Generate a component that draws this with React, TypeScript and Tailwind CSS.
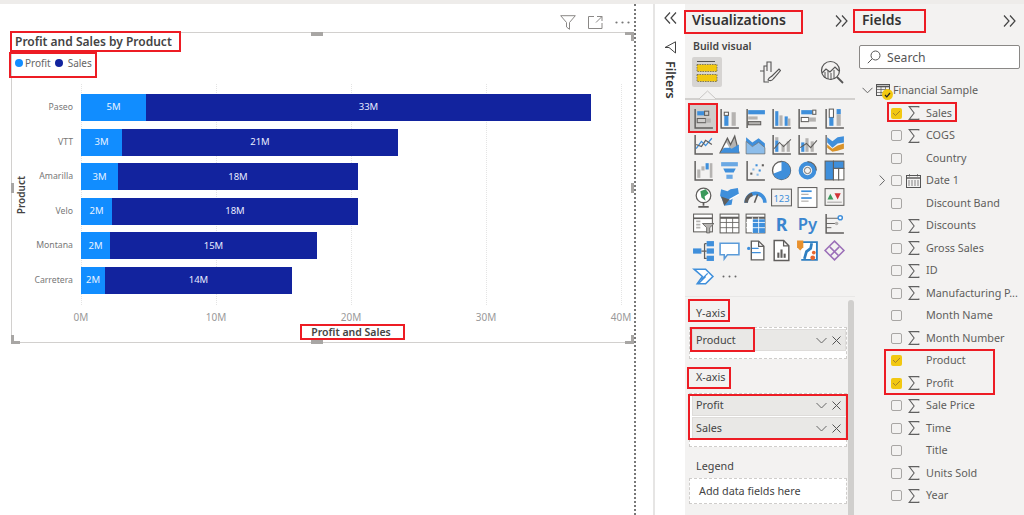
import React from "react";

const G = "#605e5c";
const B = "#3f8fdb";
const L = "#b5b3b1";

const Red = ({ c }: { c: string }) => <div className={"absolute border-[2px] border-[#ed1c24] pointer-events-none " + c} />;

const Ic = ({ children }: { children: React.ReactNode }) => (
  <svg width="23" height="23" viewBox="0 0 22 22" fill="none" stroke={G} strokeWidth="1.2">{children}</svg>
);
const R = (x: number, y: number, w: number, h: number, f: string, s = "none") => <rect x={x} y={y} width={w} height={h} fill={f} stroke={s} strokeWidth="1" />;
const axis = <path d="M3 2V20H20" stroke={G} strokeWidth="1.4" />;

const vizIcons: React.ReactNode[] = [
  <Ic><path d="M3 2V20H20" stroke={G} strokeWidth="1.4" />{R(5, 4, 7, 4, B)}{R(12, 4, 4, 4, "#cfcdcb", G)}{R(5, 11, 8, 4, "#cfcdcb", G)}{R(13, 11, 5, 4, L)}</Ic>,
  <Ic>{axis}{R(6, 8, 4, 10, B)}{R(6, 5, 4, 3, "#fff", G)}{R(13, 5, 4, 13, L)}</Ic>,
  <Ic><path d="M3 2V20" strokeWidth="1.4" />{R(4, 3, 16, 4, B)}{R(4, 9, 9, 3, L)}{R(4, 14, 12, 3, L, G)}</Ic>,
  <Ic>{axis}{R(5, 4, 3, 14, B)}{R(9, 8, 3, 10, L)}{R(14, 9, 3, 9, B)}{R(17, 11, 2.5, 7, L)}</Ic>,
  <Ic>{axis}{R(5, 3, 11, 4, B)}{R(16, 3, 3, 4, "#fff", G)}{R(5, 10, 7, 4, "#fff", G)}{R(12, 10, 7, 4, L)}</Ic>,
  <Ic>{axis}{R(6, 2, 4, 8, "#fff", G)}{R(6, 10, 4, 8, B)}{R(13, 2, 4, 5, B)}{R(13, 7, 4, 11, L)}</Ic>,
  <Ic>{axis}<path d="M4 15L9 8L13 12L19 5" stroke={B} /><path d="M4 11L9 13L13 7L19 11" stroke={G} /></Ic>,
  <Ic><path d="M2 19L9 5L12 11L16 3L20 19Z" fill={L} stroke={G} /><path d="M2 19L8 12L13 15L20 11V19Z" fill={B} stroke="none" /><path d="M8 9L11 14H5Z" fill="#fff" stroke="none" /></Ic>,
  <Ic><path d="M2 4L8 9L14 5L20 10V14L14 9L8 13L2 8Z" fill={B} stroke="none" /><path d="M2 8L8 13L14 9L20 14V20H2Z" fill="#8dbdea" stroke={G} strokeWidth=".6" /></Ic>,
  <Ic>{axis}{R(5, 7, 3, 11, B)}{R(5, 4, 3, 3, L)}{R(11, 11, 3, 7, L)}{R(16, 8, 3, 10, L)}<path d="M4 15L9 9L13 13L20 6" strokeWidth="1" /></Ic>,
  <Ic>{axis}{R(5, 9, 3, 9, B)}{R(9, 5, 3, 13, L)}{R(14, 8, 3, 10, L)}<path d="M4 14L10 10L14 14L20 7" strokeWidth="1" /></Ic>,
  <Ic><path d="M3 2V20H20" /><path d="M4 4L9 8L14 4L20 3V9L14 10L9 14L4 9Z" fill={B} stroke="none" /><path d="M4 11L9 15L14 12L20 10V15L14 17L9 18L4 14Z" fill="#d9932a" stroke="none" /></Ic>,
  <Ic>{axis}{R(5, 10, 3, 8, L)}{R(9, 7, 3, 4, L)}{R(13, 4, 3, 6, B)}{R(17, 4, 2.5, 14, L)}</Ic>,
  <Ic>{R(3, 3, 16, 4, "#6aa8e4")}<path d="M5 9H17L15 13H7Z" fill={B} stroke="none" /><path d="M8 15H14V19H8Z" fill="#6aa8e4" stroke="none" /></Ic>,
  <Ic>{axis}{R(11, 5, 2, 2, B)}{R(8, 9, 2, 2, "#8dbdea")}{R(14, 10, 2, 2, B)}{R(17, 5, 2, 2, G)}{R(6, 13, 2, 2, G)}{R(12, 14, 2, 2, "#8dbdea")}</Ic>,
  <Ic><circle cx="11" cy="11" r="8.6" fill="#fff" stroke={G} strokeWidth="1.3" /><path d="M11 11V2.4A8.6 8.6 0 1 1 3 14Z" fill={B} stroke="none" /></Ic>,
  <Ic><circle cx="11" cy="11" r="6.5" stroke={B} strokeWidth="4" /><path d="M11 2.5A8.5 8.5 0 0 1 19.5 11" stroke={G} strokeWidth="1" /><circle cx="11" cy="11" r="3" stroke={G} strokeWidth=".8" /></Ic>,
  <Ic>{R(2, 2, 8, 18, B, G)}{R(10, 2, 10, 7, B, G)}{R(10, 9, 5, 11, "#fff", G)}{R(15, 9, 5, 11, "#fff", G)}</Ic>,
  <Ic><circle cx="11" cy="9" r="7" fill="#fff" stroke={G} /><path d="M8 5L13 3L16 7L12 10L13 14L9 11Z" fill="#3a9a5c" stroke="none" /><path d="M11 16V19M6 20H16" strokeWidth="1.6" /></Ic>,
  <Ic><path d="M3 3L9 5L12 3L19 2L20 8L14 12L13 18L6 19L4 13L2 9Z" fill={B} stroke="none" /><path d="M3 10L11 13L6 19L4 13Z" fill={G} stroke="none" /><path d="M11 13L20 8" stroke="#fff" /></Ic>,
  <Ic><path d="M2 16A9 9 0 0 1 20 16" stroke={B} strokeWidth="3.5" /><path d="M2 16A9 9 0 0 1 8 8" stroke={G} strokeWidth="3.5" /><path d="M10 16L13 8" stroke={G} strokeWidth="1.5" /></Ic>,
  <Ic>{R(1.5, 3, 19, 16, "#f3f2f1", G)}<text x="11" y="15" textAnchor="middle" fontSize="9" fill={B} stroke="none" fontFamily="'Noto Sans',sans-serif">123</text></Ic>,
  <Ic>{R(2, 1.5, 18, 19, "#fff", G)}<path d="M5 5H15" stroke={B} strokeWidth="1.6" /><path d="M5 8H12" stroke={L} /><path d="M5 11.5H15" stroke={B} strokeWidth="1.6" /><path d="M5 14.5H12" stroke={L} /></Ic>,
  <Ic>{R(2, 2.5, 18, 16, "#f3f2f1", G)}<path d="M5.5 6.5L8.5 12H2.8Z" transform="translate(1.5 1)" fill="#3a9a5c" stroke="none" /><path d="M11 7H17L14 13Z" fill="#d13438" stroke="none" /><path d="M4 15.5H18" stroke={L} /></Ic>,
  <Ic>{R(1.5, 2, 18, 17, "#fff", G)}<path d="M1.5 6H19.5" strokeWidth="1.6" /><path d="M4 9H8M4 12H8M4 15H8" stroke={L} strokeWidth="1.6" /><path d="M10 11H21L17 15V20H14V15Z" fill={L} stroke={G} strokeWidth=".8" /></Ic>,
  <Ic>{R(2, 2, 18, 18, "#fff", G)}<path d="M2 5.5H20" strokeWidth="2" /><path d="M2 10H20M2 15H20M8 5V20M14 5V20" strokeWidth=".8" /></Ic>,
  <Ic>{R(2, 2, 18, 18, "#fff", G)}<path d="M2 5.5H20" strokeWidth="2" />{R(8, 7, 12, 13, B)}<path d="M2 10H20M2 15H20M8 5V20M14 5V20" stroke="#fff" strokeWidth=".8" /></Ic>,
  <Ic><text x="11" y="18" textAnchor="middle" fontSize="17" fontWeight="700" fill="#3b86cf" stroke="none" fontFamily="'Noto Sans',sans-serif">R</text></Ic>,
  <Ic><text x="11" y="17" textAnchor="middle" fontSize="16" fontWeight="600" fill="#3b86cf" stroke="none" fontFamily="'Noto Sans',sans-serif">Py</text></Ic>,
  <Ic><path d="M3 2V20H20" strokeWidth="1.4" /><path d="M3 6H16M3 11H13M3 15H8" stroke={G} strokeWidth=".9" /><circle cx="16.5" cy="5.5" r="2" stroke={B} fill="#fff" strokeWidth="1.4" /><circle cx="13" cy="11" r="1.7" fill={L} stroke="none" /></Ic>,
  <Ic>{R(1, 9, 8, 5, B)}{R(14, 2, 7, 5, B)}{R(14, 9, 7, 5, B)}{R(14, 16, 7, 5, B)}<path d="M9 11.5H14M12 4.5V18.5H14M12 4.5H14" /></Ic>,
  <Ic><path d="M2 4H20V15H9L6 19V15H2Z" fill="#fff" stroke="#5b9bd9" strokeWidth="1.5" /></Ic>,
  <Ic><path d="M7 2H14L19 7V20H7Z" fill="#fff" stroke={G} strokeWidth="1.3" /><path d="M14 2V7H19" /><circle cx="4.5" cy="9" r="1.6" fill={B} stroke="none" /><path d="M7.5 9H14M7.5 13H16" stroke={B} /></Ic>,
  <Ic><path d="M4 1.5H13L18 6.5V20.5H4Z" fill="#fff" stroke={G} strokeWidth="1.4" /><path d="M13 1.5V6.5H18" />{R(7, 13, 2, 5, G)}{R(10, 10, 2, 8, G)}{R(13, 14, 2, 4, G)}</Ic>,
  <Ic><path d="M5 3H20V20H5" fill="#fff" stroke="#2f7fc1" strokeWidth="1.8" /><path d="M8 19L10 12L14 9L15 4" stroke="#2f7fc1" strokeWidth="2.6" /><path d="M1 1.5H7V8L4 11L1 8Z" fill="#e8912d" stroke="none" /><circle cx="17" cy="13" r="1.8" fill="#e8652d" stroke="none" /><circle cx="16" cy="18" r="2.3" fill="#e8652d" stroke="none" /></Ic>,
  <Ic><path d="M11 2L16 7L20 11L16 15L11 20L6 15L2 11L6 7Z" stroke="#9b6fb8" strokeWidth="1.5" /><path d="M6.5 7.5L15 16M15.5 7.5L7 16" stroke="#9b6fb8" strokeWidth="1.5" /></Ic>,
  <Ic><path d="M2 4H13L20 11L13 18H5L10 11Z" stroke="#3f8fdb" strokeWidth="1.5" fill="#fff" /><path d="M9 14L15 8M6 18L13 11" stroke="#3f8fdb" strokeWidth="1.3" /></Ic>,
  <svg width="15" height="3" viewBox="0 0 15 3" fill="#666"><circle cx="1.5" cy="1.5" r="1" /><circle cx="7.5" cy="1.5" r="1" /><circle cx="13.5" cy="1.5" r="1" /></svg>,
];

const Chevrons = ({ dir }: { dir: "l" | "r" }) => (
  <svg width="13" height="12" viewBox="0 0 13 12" fill="none" stroke="#444" strokeWidth="1.2">
    {dir === "l" ? <path d="M6 .5L1 6L6 11.5M12 .5L7 6L12 11.5" /> : <path d="M1 .5L6 6L1 11.5M7 .5L12 6L7 11.5" />}
  </svg>
);

const Pill = ({ label, c }: { label: string; c: string }) => (
  <div className={"flex items-center justify-between bg-[#e9e8e6] border border-[#dedcda] pl-[3px] pr-[4px] text-[10.8px] text-[#444] " + c}>
    <span>{label}</span>
    <div className="flex items-center gap-[5px]">
      <svg width="11" height="7" viewBox="0 0 11 7" fill="none" stroke="#666" strokeWidth="1"><path d="M.5 1L5.5 6L10.5 1" /></svg>
      <svg width="9" height="9" viewBox="0 0 9 9" fill="none" stroke="#555" strokeWidth="1"><path d="M.5 .5L8.5 8.5M8.5 .5L.5 8.5" /></svg>
    </div>
  </div>
);

const Sigma = () => (
  <svg width="12" height="14" viewBox="0 0 11 13" fill="none" stroke="#606060" strokeWidth="1"><path d="M10 1.5V.6H1L5.6 6.5L1 12.4H10V11.5" /></svg>
);

const Check = ({ on }: { on?: boolean }) =>
  on ? (
    <div className="w-[11px] h-[11px] rounded-[2px] bg-[#f2c811] flex items-center justify-center">
      <svg width="9" height="7" viewBox="0 0 9 7" fill="none" stroke="#a5822a" strokeWidth="1"><path d="M1 3L3.5 5.5L8 1" /></svg>
    </div>
  ) : (
    <div className="w-[11px] h-[11px] rounded-[2px] border border-[#a8a6a4]" />
  );

const fields: [string, boolean, boolean][] = [
  ["Sales", true, true], ["COGS", false, true], ["Country", false, false], ["Date 1", false, false],
  ["Discount Band", false, false], ["Discounts", false, true], ["Gross Sales", false, true], ["ID", false, true],
  ["Manufacturing P...", false, true], ["Month Name", false, false], ["Month Number", false, true], ["Product", true, false],
  ["Profit", true, true], ["Sale Price", false, true], ["Time", false, true], ["Title", false, false],
  ["Units Sold", false, true], ["Year", false, true],
];

const bars = [
  { n: "Paseo", a: "w-[65px]", b: "w-[445px]", la: "5M", lb: "33M" },
  { n: "VTT", a: "w-[41px]", b: "w-[276px]", la: "3M", lb: "21M" },
  { n: "Amarilla", a: "w-[37px]", b: "w-[240px]", la: "3M", lb: "18M" },
  { n: "Velo", a: "w-[31px]", b: "w-[246px]", la: "2M", lb: "18M" },
  { n: "Montana", a: "w-[29px]", b: "w-[207px]", la: "2M", lb: "15M" },
  { n: "Carretera", a: "w-[24px]", b: "w-[187px]", la: "2M", lb: "14M" },
];

const Handle = ({ c }: { c: string }) => <div className={"absolute bg-[#a8a6a4] " + c} />;

export default function App() {
  return (
    <div className="relative w-[1024px] h-[515px] overflow-hidden bg-white flex flex-col font-['Noto_Sans',sans-serif]">
      <div className="h-[4px] shrink-0 bg-[#eeecea]" />
      <div className="flex flex-1 min-h-0">
        {/* Canvas */}
        <div className="w-[636px] shrink-0 border-r-[2px] border-dotted border-[#777] flex flex-col pl-[11px]">
          <div className="h-[28px] flex items-center justify-end gap-[12px] pr-[4px] pt-[8px]">
            <svg width="16" height="15" viewBox="0 0 16 15" fill="none" stroke="#8a8886" strokeWidth="1"><path d="M.7 .7H15.3L9.5 7.5V14.3L6.5 12V7.5Z" /></svg>
            <svg width="15" height="13" viewBox="0 0 15 13" fill="none" stroke="#8a8886" strokeWidth="1"><path d="M6 .5H.5V12.5H14V7M9 .5H14V5M14 .5L8 6.5" /></svg>
            <svg width="15" height="3" viewBox="0 0 15 3" fill="#777"><circle cx="1.5" cy="1.5" r="1.1" /><circle cx="7.5" cy="1.5" r="1.1" /><circle cx="13.5" cy="1.5" r="1.1" /></svg>
          </div>
          <div className="relative w-[622px] h-[311px] border border-[#d2d0ce] border-r-0 text-[#605e5c]">
            <Handle c="left-[299px] -top-[1px] w-[12px] h-[4px]" />
            <Handle c="left-[299px] -bottom-[2px] w-[12px] h-[4px]" />
            <Handle c="-left-[1px] top-[150px] w-[3px] h-[10px]" />
            <Handle c="right-[-1px] top-[150px] w-[3px] h-[10px]" />
            <Handle c="-left-[1px] -bottom-[2px] w-[9px] h-[3px]" />
            <Handle c="-left-[1px] -bottom-[2px] w-[3px] h-[9px]" />
            <Handle c="right-[-1px] -top-[1px] w-[9px] h-[3px]" />
            <Handle c="right-[-1px] -top-[1px] w-[3px] h-[9px]" />
            <Handle c="right-[-1px] -bottom-[2px] w-[9px] h-[3px]" />
            <Handle c="right-[-1px] -bottom-[2px] w-[3px] h-[9px]" />

            <div className="h-[17px] pl-[3px] text-[12px] leading-[17px] font-semibold text-[#444] whitespace-nowrap">Profit and Sales by Product</div>
            <div className="mt-[5px] h-[16px] pl-[3px] flex items-center text-[10px] text-[#666]">
              <span className="w-[8px] h-[8px] rounded-full bg-[#118dff]" />
              <span className="ml-[2px]">Profit</span>
              <span className="ml-[4px] w-[8px] h-[8px] rounded-full bg-[#12239e]" />
              <span className="ml-[5px]">Sales</span>
            </div>
            <div className="relative mt-[23px] flex">
              <div className="w-[17px] flex items-center justify-center pt-[3px]">
                <span className="[writing-mode:vertical-rl] rotate-180 text-[10px] font-semibold text-[#444] leading-none">Product</span>
              </div>
              <div className="absolute left-[69px] -top-[10px] -bottom-[11px] w-0 border-l border-dotted border-[#e4e4e4]" />
              <div className="absolute left-[204px] -top-[10px] -bottom-[11px] w-0 border-l border-dotted border-[#e4e4e4]" />
              <div className="absolute left-[339px] -top-[10px] -bottom-[11px] w-0 border-l border-dotted border-[#e4e4e4]" />
              <div className="absolute left-[474px] -top-[10px] -bottom-[11px] w-0 border-l border-dotted border-[#e4e4e4]" />
              <div className="absolute left-[609px] -top-[10px] -bottom-[11px] w-0 border-l border-dotted border-[#e4e4e4]" />
              <div className="relative flex flex-col gap-[7.6px]">
                {bars.map((b) => (
                  <div key={b.n} className="flex items-center h-[27px]">
                    <div className="w-[44px] text-right text-[8.7px] text-[#777] whitespace-nowrap">{b.n}</div>
                    <div className={"ml-[8px] h-full bg-[#118dff] text-[#e8f2ff] text-[9.5px] flex items-center justify-center " + b.a}>{b.la}</div>
                    <div className={"h-full bg-[#12239e] text-[#e8ebff] text-[9.5px] flex items-center justify-center " + b.b}>{b.lb}</div>
                  </div>
                ))}
              </div>
            </div>
            <div className="mt-[16px] h-[14px] flex ml-[69px] text-[10px] text-[#999] leading-[14px]">
              <span className="w-[135px] shrink-0 -translate-x-1/2 text-center">0M</span>
              <span className="w-[135px] shrink-0 -translate-x-1/2 text-center">10M</span>
              <span className="w-[135px] shrink-0 -translate-x-1/2 text-center">20M</span>
              <span className="w-[135px] shrink-0 -translate-x-1/2 text-center">30M</span>
              <span className="w-[135px] shrink-0 -translate-x-1/2 text-center">40M</span>
            </div>
            <div className="mt-[1px] h-[14px] text-center pl-[57px] text-[10.5px] leading-[14px] font-semibold text-[#444]">Profit and Sales</div>
          </div>
        </div>

        <div className="w-[17px] shrink-0" />

        {/* Filters */}
        <div className="w-[32px] shrink-0 border-l-[2px] border-[#e6e5e4] flex flex-col items-center pt-[8px]">
          <Chevrons dir="l" />
          <svg className="mt-[17px]" width="12" height="13" viewBox="0 0 12 13" fill="none" stroke="#444" strokeWidth="1"><path d="M11.5 .8V12L5 6.5H1L11.5 .8Z" /></svg>
          <span className="mt-[7px] [writing-mode:vertical-rl] text-[12.5px] font-semibold text-[#333] leading-none">Filters</span>
        </div>

        {/* Visualizations */}
        <div className="w-[170px] shrink-0 bg-[#f3f2f1] flex flex-col">
          <div className="h-[34px] flex items-center justify-between pl-[7px] pr-[7px]">
            <span className="text-[14px] font-semibold text-[#333] leading-none pb-[2px]">Visualizations</span>
            <Chevrons dir="r" />
          </div>
          <div className="mt-[1px] h-[14px] pl-[8px] text-[10.5px] leading-[14px] font-semibold text-[#444]">Build visual</div>
          <div className="mt-[4px] flex items-center h-[30px] pl-[7px]">
            <div className="w-[30px] h-[30px] bg-[#d6d4d2] rounded-[2px] flex items-center justify-center">
              <svg width="26" height="26" viewBox="0 0 26 26" fill="none"><path d="M3 2.5H21" stroke="#555" /><rect x="3" y="5.5" width="20" height="7" fill="#f2c811" stroke="#555" strokeDasharray="1.5 1" strokeWidth=".7" /><rect x="3" y="15.5" width="20" height="7" fill="#f2c811" stroke="#555" strokeDasharray="1.5 1" strokeWidth=".7" /></svg>
            </div>
            <div className="ml-[37px]">
              <svg width="22" height="24" viewBox="0 0 22 24" fill="none" stroke="#555" strokeWidth="1.1"><path d="M1 11H5V6H8V2H12V12M5 11V22H10M8 6V11" /><path d="M9 20C10 17 12 17 13 16L20 9L21.5 10.5L15 18C14 19 13.5 22 9 20Z" /></svg>
            </div>
            <div className="ml-[39px]">
              <svg width="24" height="24" viewBox="0 0 24 24" fill="none" stroke="#555" strokeWidth="1.2"><circle cx="10.5" cy="10.5" r="9" /><path d="M17 17L23 23" strokeWidth="1.8" /><path d="M2 13L6 9L10 12L15 7L19 11" /><path d="M5 12V18M8 11V19M11 13V20M14 10V19" strokeWidth="1" /></svg>
            </div>
          </div>
          <div className="relative mt-[11px] h-[2px] bg-[#d2d0ce]">
            <svg className="absolute left-[14px] -top-[8px]" width="17" height="10" viewBox="0 0 17 10" fill="none"><path d="M0 9L8.5 1L17 9Z" fill="#f3f2f1" /><path d="M0 9L8.5 1L17 9" stroke="#c8c6c4" /></svg>
          </div>
          <div className="mt-[5px] ml-[5px] grid grid-cols-[repeat(6,26.2px)] auto-rows-[26.4px] h-[185px]">
            {vizIcons.map((ic, i) => (
              <div key={i} className={"flex items-center justify-center " + (i === 0 ? "bg-[#cfcdcb] w-[26px] h-[26px]" : "")}>{ic}</div>
            ))}
          </div>
          <div className="h-[1px] mt-[6px] bg-[#e8e7e6]" />
          <div className="flex flex-1 min-h-0 mt-[3px]">
            <div className="w-[163px] pl-[4px] pt-[3px] flex flex-col">
              <div className="h-[20px] pl-[7px] text-[10.8px] leading-[20px] text-[#444]">Y-axis</div>
              <div className="mt-[4px] w-[158px] h-[32px] bg-white border border-dashed border-[#cfcdcb] pt-[1px] pl-[2px]">
                <Pill label="Product" c="h-[22px]" />
              </div>
              <div className="mt-[8px] h-[20px] pl-[7px] text-[10.8px] leading-[20px] text-[#444]">X-axis</div>
              <div className="mt-[6px] w-[158px] h-[54px] bg-white border border-dashed border-[#cfcdcb] pt-[1px] pl-[2px] flex flex-col gap-[1px]">
                <Pill label="Profit" c="h-[21px]" />
                <Pill label="Sales" c="h-[22px]" />
              </div>
              <div className="mt-[9px] h-[20px] pl-[7px] text-[10.8px] leading-[20px] text-[#444]">Legend</div>
              <div className="mt-[2px] w-[158px] h-[26px] bg-white border border-dashed border-[#cfcdcb] pl-[9px] text-[10.8px] leading-[24px] text-[#444]">Add data fields here</div>
            </div>
            <div className="w-[6px] bg-[#d0cfcd] rounded-t-[3px]" />
          </div>
        </div>

        {/* Fields */}
        <div className="flex-1 bg-[#f3f2f1] flex flex-col">
          <div className="h-[34px] flex items-center justify-between pl-[7px] pr-[8px]">
            <span className="text-[14px] font-semibold text-[#333] leading-none pb-[2px]">Fields</span>
            <Chevrons dir="r" />
          </div>
          <div className="mt-[7px] mx-[4px] h-[24px] bg-white border border-[#8a8886] rounded-[2px] flex items-center pl-[7px] text-[12.2px] text-[#555]">
            <svg width="14" height="14" viewBox="0 0 14 14" fill="none" stroke="#555" strokeWidth="1"><circle cx="8.5" cy="5.5" r="4.5" /><path d="M5.2 8.8L.8 13.2" /></svg>
            <span className="ml-[6px] pt-[2px]">Search</span>
          </div>
          <div className="relative mt-[10px] h-[22px] flex items-center pl-[7px] text-[10.8px] text-[#605e5c]">
            <svg width="11" height="7" viewBox="0 0 11 7" fill="none" stroke="#666" strokeWidth="1"><path d="M.5 .8L5.5 5.8L10.5 .8" /></svg>
            <svg className="ml-[3px]" width="14" height="12" viewBox="0 0 14 12" fill="none" stroke="#555" strokeWidth="1"><rect x=".5" y=".5" width="13" height="11" /><path d="M.5 2.5H13.5" strokeWidth="1.6" /><path d="M.5 5.5H13.5M.5 8.5H13.5M5 2V12M9.5 2V12" strokeWidth=".7" /></svg>
            <span className="ml-[3px]">Financial Sample</span>
            <span className="absolute left-[27px] top-[10px] w-[11px] h-[11px] rounded-full bg-[#f2c811] flex items-center justify-center">
              <svg width="7" height="6" viewBox="0 0 7 6" fill="none" stroke="#222" strokeWidth="1.2"><path d="M1 3L2.8 4.8L6 1" /></svg>
            </span>
          </div>
          <div className="mt-[0.8px] grid auto-rows-[22.5px] text-[10.8px] text-[#605e5c]">
            {fields.map(([n, on, sig]) => (
              <div key={n} className="flex items-center">
                <div className="w-[36px] flex justify-end pr-[6px]">
                  {n === "Date 1" && <svg width="6" height="11" viewBox="0 0 6 11" fill="none" stroke="#666" strokeWidth="1"><path d="M.7 .5L5.5 5.5L.7 10.5" /></svg>}
                </div>
                <Check on={on} />
                <div className="w-[24px] flex justify-center pr-[1px]">
                  {sig && <Sigma />}
                  {n === "Date 1" && <svg width="15" height="14" viewBox="0 0 15 14" fill="none" stroke="#555" strokeWidth="1"><rect x=".5" y="1.5" width="14" height="12" /><path d="M.5 4H14.5" strokeWidth="1.4" /><path d="M3.5 0V2.5M11.5 0V2.5M3 6V12M6 6V12M9 6V12M12 6V12" strokeWidth=".7" /></svg>}
                </div>
                <span className="whitespace-nowrap">{n}</span>
              </div>
            ))}
          </div>
        </div>
      </div>

      {/* Annotation boxes */}
      <Red c="left-[10px] top-[31px] w-[171px] h-[21px]" />
      <Red c="left-[9px] top-[52px] w-[88px] h-[26px]" />
      <Red c="left-[300px] top-[324px] w-[105px] h-[16px]" />
      <Red c="left-[684px] top-[10px] w-[119px] h-[24px]" />
      <Red c="left-[688px] top-[103px] w-[30px] h-[30px]" />
      <Red c="left-[688px] top-[299px] w-[42px] h-[23px]" />
      <Red c="left-[690px] top-[327px] w-[65px] h-[25px]" />
      <Red c="left-[687px] top-[367px] w-[44px] h-[22px]" />
      <Red c="left-[688px] top-[394px] w-[160px] h-[46px]" />
      <Red c="left-[853px] top-[9px] w-[73px] h-[24px]" />
      <Red c="left-[887px] top-[102px] w-[70px] h-[20px]" />
      <Red c="left-[884px] top-[349px] w-[111px] h-[46px]" />
    </div>
  );
}
